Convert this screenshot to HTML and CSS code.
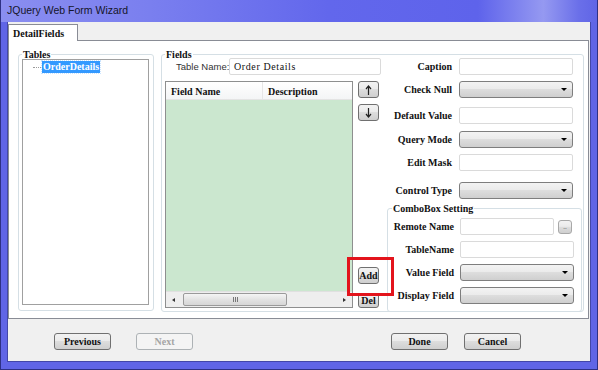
FILE: index.html
```html
<!DOCTYPE html>
<html lang="en">
<head>
  <meta charset="UTF-8" />
  <title>JQuery Web Form Wizard</title>
  <link rel="stylesheet" href="styles.css">
</head>
<body>
  <div class="window">
    <div class="titlebar">JQuery Web Form Wizard</div>

    <div class="client">
      <div class="tabs">
        <div class="tab">DetailFields</div>
      </div>

      <div class="tabpage">
        <fieldset class="group tables">
          <legend>Tables</legend>
          <div class="tree">
            <div class="node"><span class="dots"></span><span class="sel">OrderDetails</span></div>
          </div>
        </fieldset>

        <fieldset class="group fields">
          <legend>Fields</legend>

          <div class="fields-left">
            <div class="tname">
              <label>Table Name:</label>
              <div class="input wide">Order Details</div>
            </div>

            <div class="list-row">
              <div class="list">
                <div class="list-head">
                  <div class="col first">Field Name</div>
                  <div class="col">Description</div>
                </div>
                <div class="list-body"></div>
                <div class="hscroll">
                  <span class="arr left"></span>
                  <div class="thumb"><span class="grip"></span></div>
                  <span class="arr right"></span>
                </div>
              </div>

              <div class="side">
                <button class="btn small" title="Up">
                  <svg width="7" height="10" viewBox="0 0 7 10"><path d="M3.5 1v9M1 4l2.5-3 2.5 3" fill="none" stroke="#222" stroke-width="1.2"/></svg>
                </button>
                <button class="btn small" title="Down">
                  <svg width="7" height="10" viewBox="0 0 7 10"><path d="M3.5 0v9M1 6l2.5 3 2.5-3" fill="none" stroke="#222" stroke-width="1.2"/></svg>
                </button>
                <div class="spacer"></div>
                <div class="marked"><button class="btn small">Add</button></div>
                <button class="btn small del">Del</button>
              </div>
            </div>
          </div>

          <div class="fields-right">
            <div class="props">
              <div class="prow"><label>Caption</label><div class="input"></div></div>
              <div class="prow"><label>Check Null</label><div class="select"></div></div>
              <div class="prow"><label>Default Value</label><div class="input"></div></div>
              <div class="prow"><label>Query Mode</label><div class="select"></div></div>
              <div class="prow"><label>Edit Mask</label><div class="input"></div></div>
              <div class="prow"><label>Control Type</label><div class="select"></div></div>
            </div>

            <fieldset class="group combo">
              <legend>ComboBox Setting</legend>
              <div class="crow"><label>Remote Name</label><div class="input short"></div><button class="btn dots-btn">..</button></div>
              <div class="crow"><label>TableName</label><div class="input"></div></div>
              <div class="crow"><label>Value Field</label><div class="select"></div></div>
              <div class="crow"><label>Display Field</label><div class="select"></div></div>
            </fieldset>
          </div>
        </fieldset>
      </div>

      <div class="footer">
        <button class="btn wbtn prev">Previous</button>
        <button class="btn wbtn next" disabled>Next</button>
        <button class="btn wbtn done">Done</button>
        <button class="btn wbtn cancel">Cancel</button>
      </div>
    </div>
  </div>
</body>
</html>
```

FILE: styles.css
```css
* {
  box-sizing: border-box;
}

html,
body {
  margin: 0;
  background: #5a5fe4;
}

body {
  font-family: 'Liberation Serif', 'Times New Roman', serif;
  font-size: 10px;
  font-weight: bold;
  color: #111;
}

/* window frame */
.window {
  width: 598px;
  height: 370px;
  padding: 0 6px 7px 6px;
  border: 1px solid #2e3184;
  border-top: 0;
  background-color: #6065e6;
  display: flex;
  flex-direction: column;
}

.titlebar {
  height: 22px;
  margin: 0 -6px;
  padding: 4px 0 0 6px;
  background-color: #767bee;
  background-image: linear-gradient(to right, #8a8ef0 0%, #7a7fef 25%, #6267ec 55%, #5e63eb 80%, #9599f1 91%, #6a6fe9 97%, #6065e6 100%);
  font-family: 'Liberation Sans', Arial, sans-serif;
  font-weight: normal;
  font-size: 10.5px;
  color: #15152a;
}

.client {
  flex: 1;
  background: #f0f0f0;
  border: 1px solid #4347a8;
  border-top: none;
  display: flex;
  flex-direction: column;
}

/* tabs */
.tabs {
  height: 18px;
  display: flex;
  align-items: flex-end;
}

.tab {
  height: 17px;
  width: 70px;
  background: #ffffff;
  border: 1px solid #898c95;
  border-bottom: none;
  padding: 3px 0 0 4px;
  margin-bottom: -1px;
  position: relative;
  z-index: 1;
}

.tabpage {
  height: 279px;
  margin-right: 1px;
  background: #ffffff;
  border: 1px solid #898c95;
  padding: 9px 0 0 9px;
  display: flex;
  gap: 7px;
}

/* group boxes */
.group {
  margin: 0;
  border: 1px solid #d5dfe5;
  border-radius: 3px;
  min-width: 0;
}

.group legend {
  padding: 0 1px;
  line-height: 9px;
}

.tables {
  width: 136px;
  height: 261px;
  padding: 0 4px 3px 3px;
}

.tree {
  width: 127px;
  height: 246px;
  border: 1px solid #a0a0a0;
  background: #ffffff;
  padding-top: 1px;
}

.node {
  display: flex;
  align-items: center;
  padding-left: 10px;
}

.dots {
  width: 8px;
  border-top: 1px dotted #9a9a9a;
  margin-right: 1px;
}

.sel {
  background: #3399ff;
  color: #ffffff;
  padding: 0 1px;
  line-height: 12px;
  outline: 1px dotted #c9e4ff;
}

.fields {
  width: 423px;
  height: 262px;
  padding: 0 1px 2px 3px;
  display: flex;
}

.fields-left {
  width: 222px;
  margin-top: -1px;
}

.tname {
  display: flex;
  align-items: center;
  height: 17px;
}

.tname label {
  width: 64px;
  padding-left: 11px;
  white-space: nowrap;
  font-family: 'Liberation Sans', Arial, sans-serif;
  font-weight: normal;
  font-size: 9.5px;
  color: #333;
}

.input {
  width: 114px;
  height: 17px;
  border: 1px solid #dadada;
  border-radius: 2px;
  background: #ffffff;
  padding: 2px 0 0 4px;
}

.input.wide {
  width: 152px;
  font-weight: normal;
  letter-spacing: 0.6px;
}

.input.short {
  width: 94px;
}

.select {
  width: 114px;
  height: 17px;
  border: 1px solid #7e7e7e;
  border-radius: 3px;
  background: linear-gradient(#f3f3f3, #ebebeb 45%, #dddddd 50%, #cfcfcf);
  position: relative;
}

.select::after {
  content: "";
  position: absolute;
  right: 5px;
  top: 6px;
  border-left: 3px solid transparent;
  border-right: 3px solid transparent;
  border-top: 3px solid #000;
}

/* field list */
.list-row {
  display: flex;
  margin-top: 6px;
}

.list {
  width: 188px;
  height: 227px;
  border: 1px solid #8e8f8f;
  display: flex;
  flex-direction: column;
}

.list-head {
  height: 18px;
  display: flex;
  background: linear-gradient(#ffffff, #f4f5f6);
  border-bottom: 1px solid #e4e4e4;
}

.col {
  padding: 4px 0 0 5px;
}

.col.first {
  width: 97px;
  border-right: 1px solid #e6e6e6;
}

.list-body {
  flex: 1;
  background: #cbe7cf;
}

.hscroll {
  height: 16px;
  background: #eeeeee;
  border-top: 1px solid #e0e0e0;
  display: flex;
  align-items: center;
  padding: 0 6px;
}

.arr {
  width: 0;
  height: 0;
  border-top: 2px solid transparent;
  border-bottom: 2px solid transparent;
}

.arr.left {
  border-right: 3px solid #333;
}

.arr.right {
  border-left: 3px solid #333;
  margin-left: auto;
}

.thumb {
  width: 104px;
  height: 13px;
  margin-left: 8px;
  border: 1px solid #9a9a9a;
  border-radius: 2px;
  background: linear-gradient(#f5f5f5, #e3e3e3 50%, #d6d6d6);
  display: flex;
  justify-content: center;
  align-items: center;
}

.grip {
  width: 5px;
  height: 5px;
  background: repeating-linear-gradient(to right, #777 0 1px, transparent 1px 2px);
}

.side {
  margin-left: 5px;
  display: flex;
  flex-direction: column;
  gap: 6px;
}

.btn {
  font-family: inherit;
  font-size: inherit;
  font-weight: bold;
  color: #111;
  border: 1px solid #707070;
  border-radius: 3px;
  background: linear-gradient(#f2f2f2, #ebebeb 45%, #dddddd 50%, #cfcfcf);
  padding: 0;
}

.btn.small {
  width: 21px;
  height: 17px;
  display: flex;
  align-items: center;
  justify-content: center;
}

.spacer {
  flex: 1;
}

.marked {
  position: relative;
  height: 17px;
}

.marked::after {
  content: "";
  position: absolute;
  left: -11px;
  top: -10px;
  width: 41px;
  height: 33px;
  border: 3px solid #e3141c;
}

.side .del {
  height: 15px;
  margin-top: 3px;
}

/* property column */
.fields-right {
  width: 195px;
}

.props {
  margin-top: -1px;
  display: flex;
  flex-direction: column;
  gap: 6px;
}

.prow {
  display: flex;
  align-items: center;
  gap: 7px;
}

.prow label,
.crow label {
  width: 65px;
  text-align: right;
  white-space: nowrap;
}

.prow:nth-child(3) { margin-top: 3px; }
.prow:nth-child(4) { margin-top: 1px; }
.prow:nth-child(6) { margin-top: 5px; }

.combo {
  margin-top: 5px;
  height: 108px;
  width: 195px;
  padding: 5px 4px 3px 4px;
  display: flex;
  flex-direction: column;
  gap: 6px;
}

.crow {
  display: flex;
  align-items: center;
  gap: 6px;
}

.crow label {
  width: 62px;
}

.dots-btn {
  width: 14px;
  height: 14px;
  margin-left: -2px;
  font-size: 7px;
  border-color: #a8a8a8;
  color: #777;
}

/* footer */
.footer {
  flex: 1;
  display: flex;
  align-items: flex-start;
  padding: 14px 69px 0 46px;
}

.wbtn {
  width: 57px;
  height: 17px;
}

.next {
  margin-left: 25px;
  color: #a5a5a5;
  border-color: #adb2b5;
  background: #f4f4f4;
}

.done {
  margin-left: auto;
}

.cancel {
  margin-left: 16px;
}
```
